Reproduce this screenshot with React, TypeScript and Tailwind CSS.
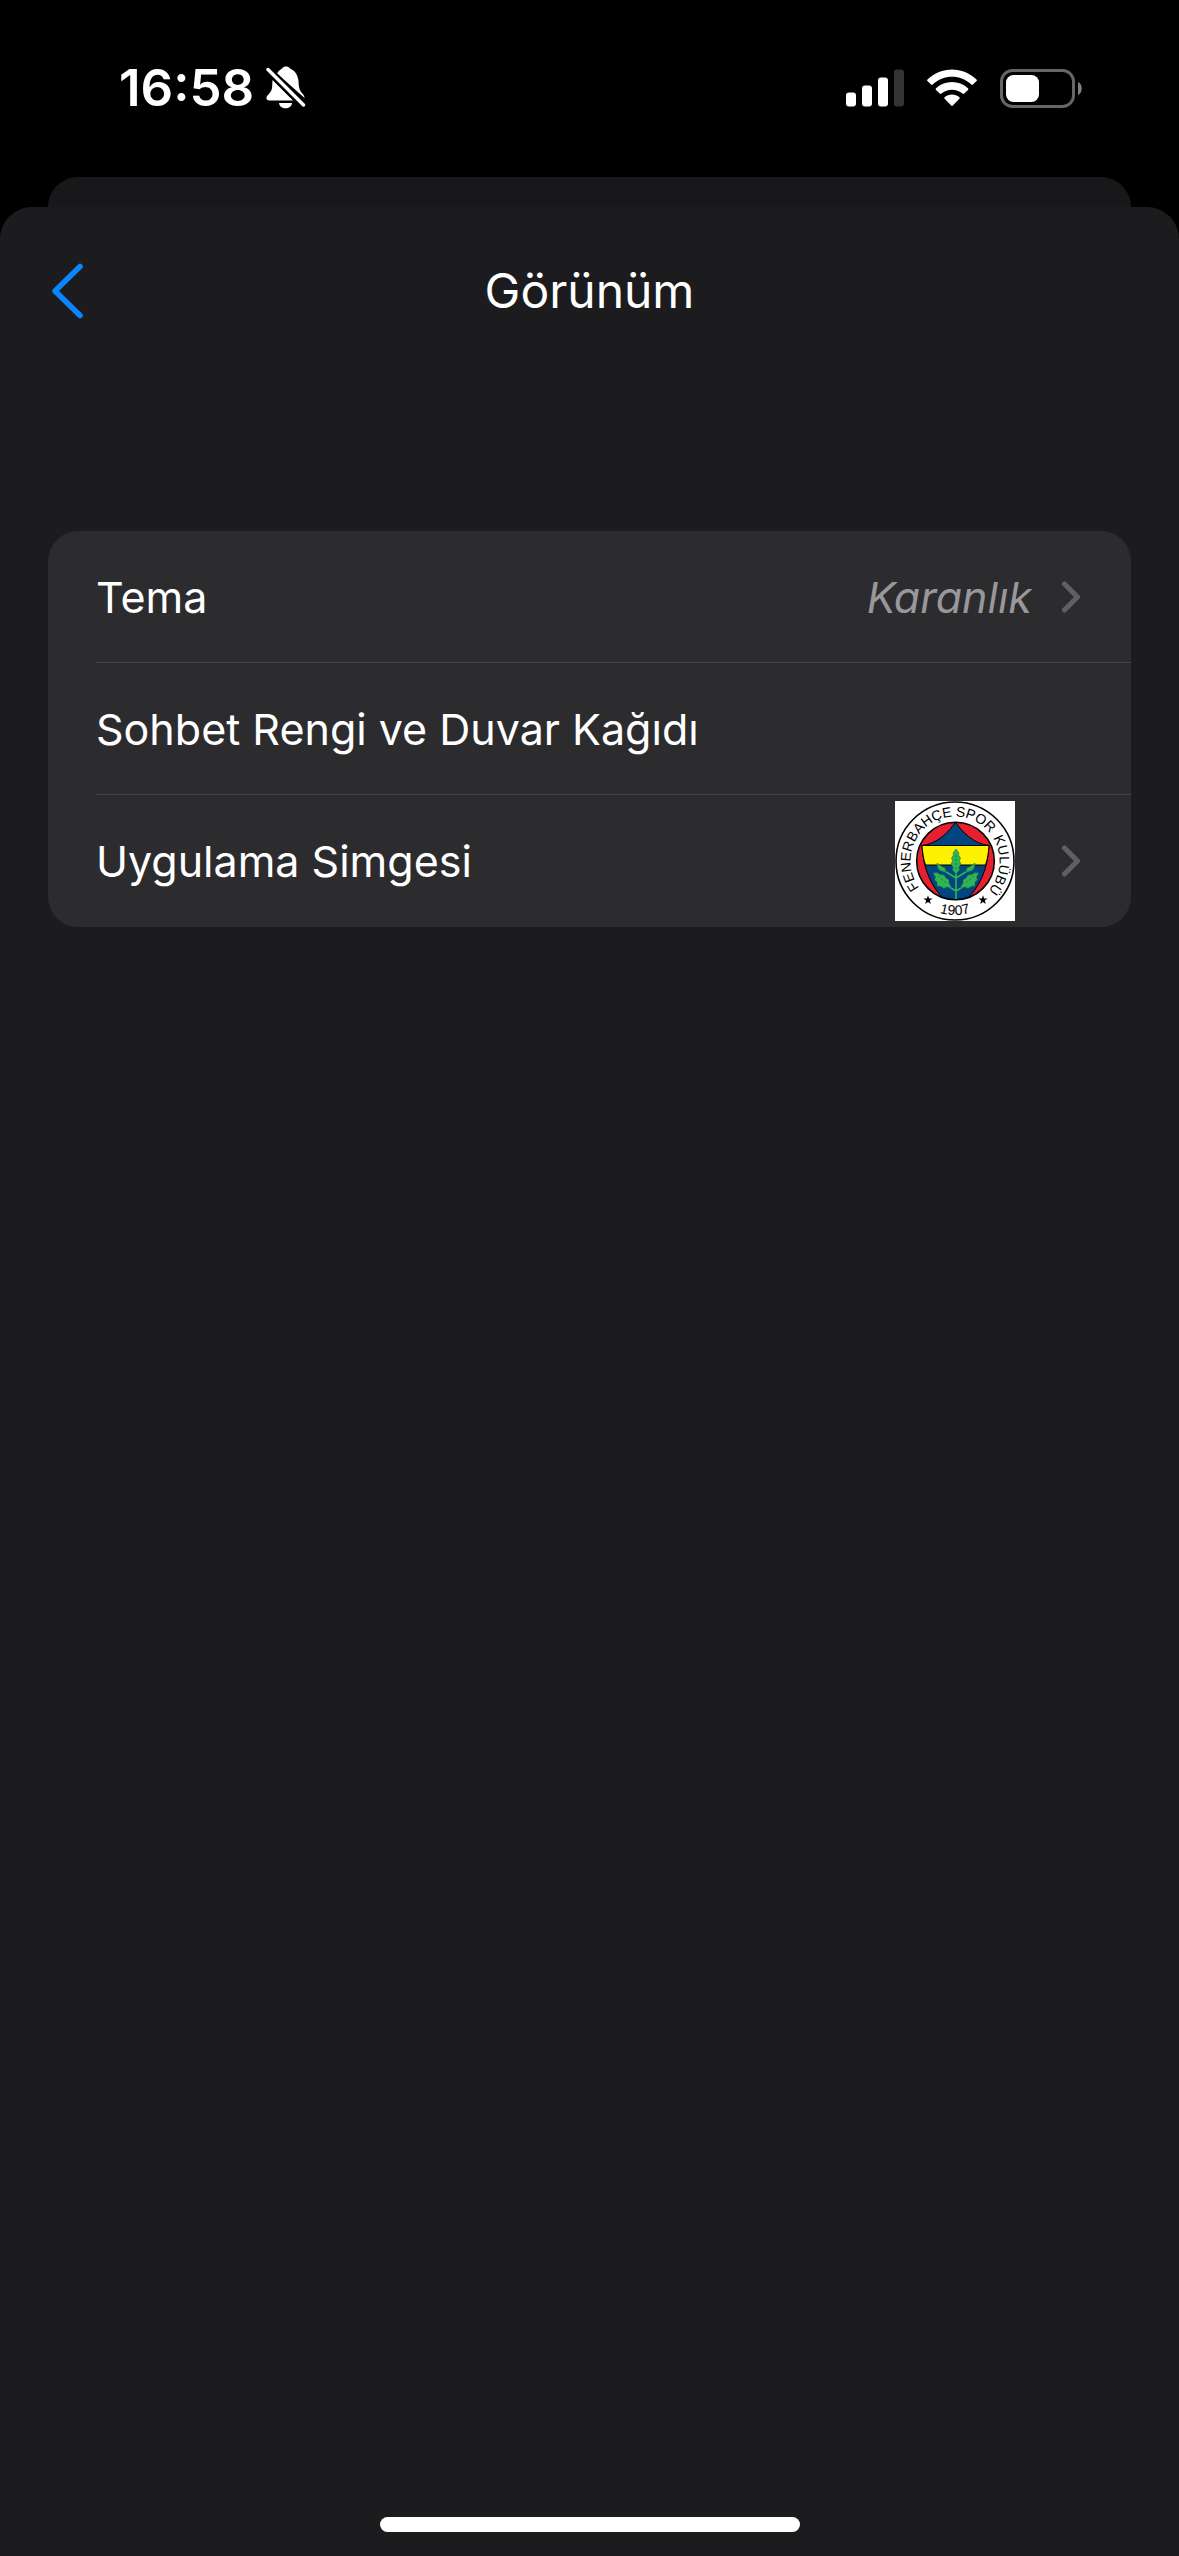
import type { ReactNode } from "react";

function BellOff() {
  return (
    <svg aria-hidden="true" viewBox="0 0 40 44" className="h-11 w-10">
      <path d="M11 7.5 C12.5 4.5 15 3 16 2.4 C18 0 22 0 24 2.4 C29 4.5 32 9 32.5 15 C32.8 22 33.5 24 36 27 C37.5 29 38.5 30 38.6 32 Z" fill="#fff" />
      <path d="M6.5 14 L27 34.5 H3.5 C0 34.5 -.3 31.5 1.5 29.5 C5 26 6 24 6.2 20 Z" fill="#fff" />
      <path d="M13 37 H26 C25.5 44 13.500 44 13 37 Z" fill="#fff" />
      <path d="M2 3.500 L37.500 39" stroke="#000" strokeWidth="7.500" />
      <path d="M2 3.500 L37.500 39" stroke="#fff" strokeWidth="3.400" strokeLinecap="round" />
    </svg>
  );
}

function Signal() {
  return (
    <svg aria-hidden="true" viewBox="0 0 58 38" className="h-[38px] w-[58px]" fill="#fff">
      <rect x="0" y="23.500" width="10" height="14" rx="3" />
      <rect x="16" y="16.500" width="10" height="21" rx="3" />
      <rect x="32" y="8.500" width="10" height="29" rx="3" />
      <rect x="48" y="0.500" width="10" height="37" rx="3" fill="#333" />
    </svg>
  );
}

function Wifi() {
  return (
    <svg aria-hidden="true" viewBox="0 0 52 38" className="h-[38px] w-[52px]" fill="#fff">
      <path d="M1.500 10.500 C15 -3 37 -3 50.500 10.500 Q51.300 11.300 50.500 12.100 L47 15.600 Q46.200 16.300 45.400 15.600 C34.500 5 17.500 5 6.600 15.600 Q5.800 16.300 5 15.600 L1.500 12.100 Q.700 11.300 1.500 10.500 Z" />
      <path d="M10 19.300 C19 11 33 11 42 19.300 Q42.800 20.100 42 20.900 L38.200 24.600 Q37.400 25.300 36.600 24.600 C30.500 19.300 21.500 19.300 15.400 24.600 Q14.600 25.300 13.800 24.600 L10 20.900 Q9.200 20.100 10 19.300 Z" />
      <path d="M18.600 28.200 C22.800 24.700 29.200 24.700 33.400 28.200 Q34.200 29 33.400 29.800 L26.800 36.600 Q26 37.300 25.200 36.600 L18.600 29.800 Q17.800 29 18.600 28.200 Z" />
    </svg>
  );
}

function Battery() {
  return (
    <svg aria-hidden="true" viewBox="0 0 82 39" className="h-[39px] w-[82px]">
      <rect x="1.500" y="1.500" width="72" height="36" rx="11" fill="none" stroke="#666" strokeWidth="3" />
      <rect x="6" y="6" width="33" height="27" rx="7.500" fill="#fff" />
      <path d="M78 13 C83 15 83 24 78 26 Z" fill="#808080" />
    </svg>
  );
}

function Chevron() {
  return (
    <svg aria-hidden="true" viewBox="0 0 18 32" className="h-8 w-[18px] shrink-0" fill="none" stroke="#606063" strokeWidth="5" strokeLinecap="round" strokeLinejoin="round">
      <path d="M2.500 3 L15.500 16 L2.500 29" />
    </svg>
  );
}

function Crest() {
  const star = "M0 -4.800 L1.100 -1.500 L4.600 -1.500 L1.800 .600 L2.800 3.900 L0 1.900 L-2.800 3.900 L-1.800 .600 L-4.600 -1.500 L-1.100 -1.500 Z";
  return (
    <svg role="img" aria-label="Fenerbahçe Spor Kulübü" viewBox="0 0 120 120" className="size-[120px] shrink-0">
      <defs>
        <path id="ring-upper" d="M60 104.500 A44.500 44.500 0 0 1 60 15.500 A44.500 44.500 0 0 1 60 104.500" />
        <path id="ring-lower" d="M6 60 A54 54 0 0 0 114 60" />
        <clipPath id="disc"><circle cx="60.500" cy="60" r="38.500" /></clipPath>
      </defs>
      <rect width="120" height="120" fill="#fff" />
      <circle cx="60" cy="60" r="59" fill="none" stroke="#000" strokeWidth="1.600" />
      <g clipPath="url(#disc)">
        <circle cx="60.500" cy="60" r="39" fill="#e81f2e" />
        <path d="M60.500 21 C54 31 42 43 27 44.500 C28 67 36 86 50 99 H71 C85 86 93 67 94 44.500 C79 43 67 31 60.500 21 Z" fill="#004580" stroke="#000" strokeWidth="1" />
        <path d="M27 44.500 H94 C93.500 52 92.500 58 90.500 64 H30.500 C28.500 58 27.500 52 27 44.500 Z" fill="#fff200" stroke="#000" strokeWidth="1" />
      </g>
      <circle cx="60.500" cy="60" r="38.800" fill="none" stroke="#000" strokeWidth="1.600" />
      <path d="M61 70 V98 M61 77 L48 69 M61 77 L74 69 M61 90 L51 84 M61 90 L71 84" fill="none" stroke="#2fb457" strokeWidth="1.600" />
      <g fill="#2fb457" stroke="#17683a" strokeWidth=".5">
        <path d="M61 48 L64 52 L63.500 54 L65.500 57 L64.500 60 L66 63 L64 66 L64.500 69 L61 73 L57.500 69 L58 66 L56 63 L57.500 60 L56.500 57 L58.500 54 L58 52 Z" />
        <path d="M42 62 L46 65 L50 67 L51 71 L47.500 70.500 L44 69 L42.500 66 Z" />
        <path d="M80 62 L76 65 L72 67 L71 71 L74.500 70.500 L78 69 L79.500 66 Z" />
        <path d="M38 72 L42 71.500 L45 73.500 L49 74 L51 77 L54 79 L54 82 L57 87 L52 86 L49 87.500 L46 85.500 L42 85 L42 81 L39.500 79 L40.500 76 Z" />
        <path d="M84 72 L80 71.500 L77 73.500 L73 74 L71 77 L68 79 L68 82 L65 87 L70 86 L73 87.500 L76 85.500 L80 85 L80 81 L82.500 79 L81.500 76 Z" />
      </g>
      <path d="M61 54 V68 M43 75 L51 82 M79 75 L71 82" stroke="#17683a" strokeWidth=".8" strokeDasharray="2 2" />
      <path d={star} transform="translate(33 99)" />
      <path d={star} transform="translate(88 99)" />
      <g className="font-['Liberation_Sans',sans-serif] text-[14px]" fill="#000">
        <text><textPath href="#ring-upper" startOffset="41">FENERBAHÇE</textPath></text>
        <text><textPath href="#ring-upper" startOffset="140">SPOR</textPath></text>
        <text><textPath href="#ring-upper" startOffset="185">KULÜBÜ</textPath></text>
        <text textAnchor="middle"><textPath href="#ring-lower" startOffset="50%">1907</textPath></text>
      </g>
    </svg>
  );
}

function Row({ label, last = false, children }: { label: string; last?: boolean; children?: ReactNode }) {
  return (
    <li className="pl-12">
      <button type="button" className={last ? "flex h-[132px] w-full items-center pr-[51px] text-left" : "flex h-[132px] w-full items-center border-b border-[#444446] pr-[51px] text-left"}>
        <span className="flex-1">{label}</span>
        {children}
      </button>
    </li>
  );
}

export default function App() {
  return (
    <div lang="tr" className="flex min-h-screen flex-col bg-black font-['Inter',sans-serif] text-white">
      <header className="flex h-[177px] items-start justify-between pt-[58px] pr-[97px] pl-[119px]">
        <div className="flex h-[60px] items-center gap-3">
          <time className="text-[51px] leading-[60px] font-semibold">16:58</time>
          <BellOff />
        </div>
        <div className="flex h-[60px] items-center gap-[22px]">
          <Signal />
          <Wifi />
          <Battery />
        </div>
      </header>
      <div className="mx-12 h-[30px] rounded-t-[30px] bg-[#18181a]" />
      <main className="flex flex-1 flex-col rounded-t-[32px] bg-[#1c1c1e] px-12 pb-6">
        <div className="grid h-[168px] grid-cols-[1fr_auto_1fr] items-center">
          <button type="button" aria-label="Geri" className="justify-self-start">
            <svg aria-hidden="true" viewBox="0 0 40 56" className="h-14 w-10" fill="none" stroke="#0a84ff" strokeWidth="5.500" strokeLinecap="round" strokeLinejoin="round">
              <path d="M32 3.500 L7 28 L32 52.500" />
            </svg>
          </button>
          <h1 className="text-[48px] leading-[60px] font-normal">Görünüm</h1>
        </div>
        <ul className="mt-[156px] overflow-hidden rounded-[30px] bg-[#2c2c2e] text-[43px] leading-[56px]">
          <Row label="Tema">
            <span className="mr-[30px] text-[#98989b] italic">Karanlık</span>
            <Chevron />
          </Row>
          <Row label="Sohbet Rengi ve Duvar Kağıdı" />
          <Row label="Uygulama Simgesi" last>
            <span className="mr-[47px]"><Crest /></span>
            <Chevron />
          </Row>
        </ul>
        <div className="mx-auto mt-auto h-[15px] w-[420px] rounded-full bg-white" />
      </main>
    </div>
  );
}
